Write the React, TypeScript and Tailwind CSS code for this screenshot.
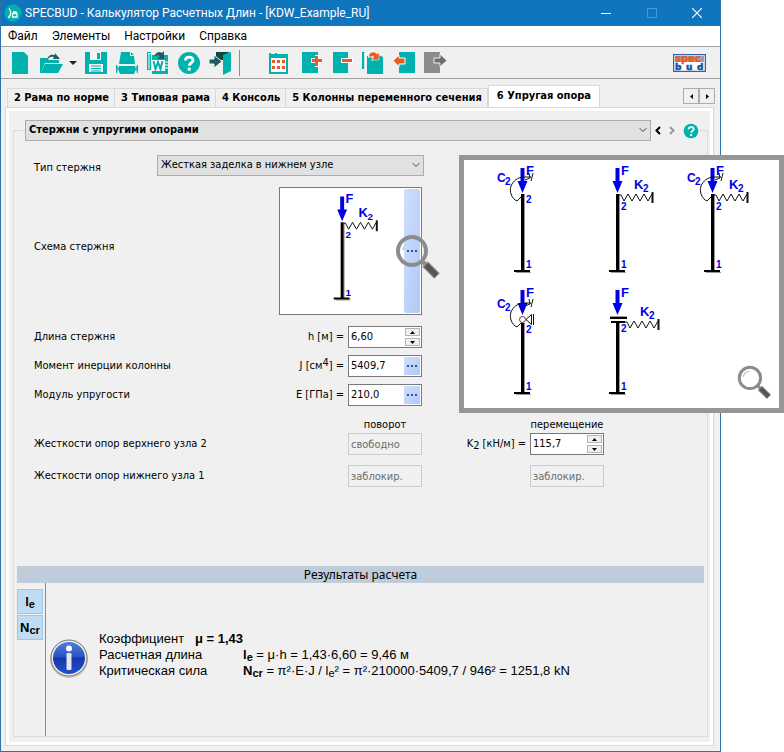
import { useState } from "react";
import type { ReactNode } from "react";
import clsx from "clsx";
import { ChevronDown } from "lucide-react";

const TEAL = "#00b2ad";
const DARK = "#1d5c63";
const ORANGE = "#ea5b24";
const BLUE = "#0000e6";

const tabs = [
  "2 Рама по норме",
  "3 Типовая рама",
  "4 Консоль",
  "5 Колонны переменного сечения",
  "6 Упругая опора",
];

const menu = ["Файл", "Элементы", "Настройки", "Справка"];

// Shared columns of the form: caption, unit, field, unit, field
const fieldGrid =
  "grid grid-cols-[241px_65px_74px_100px_74px] items-center gap-x-1";

// Toolbar icons, all drawn on a 24x24 grid
const icons: Record<string, ReactNode> = {
  new: <path d="M4 1h12l4 4v18H4z" fill={TEAL} />,
  open: (
    <>
      <path d="M1 7h7l2 2h10v3H6L2 22H1z" fill={TEAL} />
      <path d="M6 13h18l-5 9H2z" fill={TEAL} />
      <path d="M8 9c1-5 4-6 8-5V2l5 6h-7l1-2c-3-1-5 0-7 3z" fill={DARK} />
    </>
  ),
  save: (
    <>
      <path d="M1 1h22v22H1z" fill={TEAL} />
      <path d="M6 1h11v8H6zM5 13h14v8H5z" fill="#f4f4f4" />
      <path d="M13 2h3v6h-3z" fill={TEAL} />
      <path d="M7 15h10M7 17.500h10M7 20h10" stroke={TEAL} />
    </>
  ),
  print: (
    <>
      <path d="M6 1h9v4h4l1 8H4z" fill={TEAL} />
      <path d="M16 1l3 3h-3z" fill={TEAL} />
      <path d="M4 15h16l1 3-2 5H5l-2-5z" fill={TEAL} />
      <path d="M1 14h1l1 3-1 5H1zM22 14h1v8h-1l-1-5z" fill={TEAL} />
    </>
  ),
  word: (
    <>
      <path d="M1 1h4v18H1zM6 4h16v19H6z" fill={TEAL} />
      <path d="M3 2v16M2 2.500h5" stroke="#fff" />
      <path d="M6 9h13v11H6z" fill="#fff" />
      <path d="M7.500 10l2 8 2.500-7 2.500 7 2-8" fill="none" stroke={TEAL} strokeWidth="2" />
      <path d="M19 11h3M19 14h3M19 17h3" stroke="#fff" />
      <path d="M8 5c2-4 6-5 8-3l2-2v8h-7l3-3c-2-1-3-1-6 0z" fill={DARK} />
    </>
  ),
  help: (
    <>
      <circle cx="12" cy="12" r="11" fill={TEAL} />
      <path
        d="M8.500 9.500c0-4.500 7.500-4.500 7.500-.3 0 2.800-3.800 2.800-3.800 5.600"
        fill="none"
        stroke="#fff"
        strokeWidth="2.800"
      />
      <path d="M10.700 16.600h3v3h-3z" fill="#fff" />
    </>
  ),
  exit: (
    <>
      <path d="M8 1h14l-5 3v18l-2-2V9H8z" fill="#0e4a3c" />
      <path d="M15 4l8-3v19l-8 4z" fill={TEAL} />
      <path d="M1 8h5V4l8 6.500L6 17v-4H1z" fill={DARK} stroke="#f0f0f0" />
    </>
  ),
  calendar: (
    <>
      <path d="M2 2h2v1h4V2h2v1h11v20H2z" fill={TEAL} />
      <path d="M4 7h15v14H4z" fill="#fff" />
      <path
        d="M5 9h3v3H5zM10 9h3v3h-3zM15 9h3v3h-3zM5 15h3v3H5zM10 15h3v3h-3zM15 15h3v3h-3z"
        fill={ORANGE}
      />
    </>
  ),
  add: (
    <>
      <path d="M2 1h16v21H2z" fill={TEAL} />
      <path d="M11 7h4V4h4v3h3v5h-3v4h-4v-4h-4z" fill="#fff" />
      <path d="M12 8h3V5h3v3h4v3h-4v4h-3v-4h-3z" fill={ORANGE} />
    </>
  ),
  remove: (
    <>
      <path d="M2 1h15v21H2z" fill={TEAL} />
      <path d="M10 7h12v5H10z" fill="#fff" />
      <path d="M11 8h10v3H11z" fill={ORANGE} />
    </>
  ),
  copy: (
    <>
      <path d="M0 1h3v17H0zM5 5h12v-1l4 2v17H5z" fill={TEAL} />
      <path d="M3 2v16M2 2.500h5M6 5.500h5v4" fill="none" stroke="#fff" strokeWidth="1.500" />
      <path d="M7 3c4-3 6-2 8 0l2-2v8h-8l3-3c-2-1-3-1-5 1z" fill={ORANGE} stroke="#fff" strokeWidth=".5" />
    </>
  ),
  back: (
    <>
      <path d="M6 1h16v21H6z" fill={TEAL} />
      <path d="M0 9.500L6 4v3h6v6H6v3z" fill={ORANGE} stroke="#fff" />
    </>
  ),
  forward: (
    <>
      <path d="M0 1h16v21H0z" fill="#8c8c8c" />
      <path d="M10 7h6V3l7 6.500-7 6.500v-4h-6z" fill="#6e6e6e" stroke="#f0f0f0" />
    </>
  ),
};

function ToolButton({ name, label, small = false }: { name: string; label: string; small?: boolean }) {
  return (
    <button type="button" aria-label={label} className="shrink-0">
      <svg viewBox="0 0 24 24" className={small ? "size-4" : "size-6"}>
        {icons[name]}
      </svg>
    </button>
  );
}

type SchemeProps = {
  rotation?: boolean;
  spring?: boolean;
  hinge?: boolean;
  guide?: boolean;
};

// Column with load F, top node 2 and fixed bottom node 1
function Scheme({ rotation, spring, hinge, guide }: SchemeProps) {
  const columnTop = hinge ? 41 : guide ? 39 : 34;
  const labelY = hinge ? 51 : spring ? 50 : 43;

  return (
    <svg
      viewBox="0 0 95 122"
      width="95"
      height="122"
      className="font-['Liberation_Sans'] font-bold"
      fill={BLUE}
    >
      <path d={`M34.500 ${columnTop}V110M26 112.500h15`} stroke="#999" fill="none" />
      <path d={`M31 ${columnTop}h3V110h6v2H24v-2h7z`} fill="#000" />
      <path d="M30.500 8h4v13h3l-5 12-5-12h3z" />
      <text x="36" y="15" fontSize="13">F</text>
      <text x="36" y={labelY} fontSize="10">2</text>
      <text x="36" y="108" fontSize="10">1</text>

      {rotation && (
        <g transform={hinge ? "translate(0 4)" : undefined}>
          <path
            d="M31 37l-4 4c-5-2-8-9-6-15 2-5 7-9 13-9h7M39 13l1 5-5 2M43 13l-2 8"
            fill="none"
            stroke="#111"
          />
          <text x="7" y="22" fontSize="12">C</text>
          <text x="15" y="25" fontSize="10">2</text>
        </g>
      )}

      {spring && (
        <g transform={guide ? "translate(6 5)" : undefined}>
          <path
            d="M34 35h2l3 6 4-7 4 7 4-7 4 7 4-7 4 7 4-7"
            fill="none"
            stroke="#111"
          />
          <path d="M67.500 32v11" stroke="#111" strokeWidth="2" />
          <text x="49" y="29" fontSize="13">K</text>
          <text x="58" y="32" fontSize="10">2</text>
        </g>
      )}

      {hinge && (
        <g stroke="#111" fill="#fff">
          <path d="M36 37.500l5.500-5v10zM43.500 32v11" />
          <circle cx="32.500" cy="37.500" r="3" stroke="#7a2a2a" />
        </g>
      )}

      {guide && (
        <>
          <path d="M25 34h17v1H25z" fill="#999" />
          <path d="M25 35h17v2H25zM26 39h14v2H26z" fill="#000" />
        </>
      )}
    </svg>
  );
}

function Magnifier({ className }: { className?: string }) {
  return (
    <svg viewBox="0 0 46 46" className={className} fill="none">
      <path d="M26 26l6 6" stroke="#8c8c8c" strokeWidth="4" />
      <path d="M30 30l12 12" stroke="#8f8f8f" strokeWidth="8" />
      <path d="M31 31l10.500 10.500" stroke="#555" strokeWidth="5.500" />
      <circle cx="17" cy="17" r="14" stroke="#8c8c8c" strokeWidth="4" />
      <path d="M8 16c1-5 4-7 8-8" stroke="#b8d8f0" strokeWidth="2" />
    </svg>
  );
}

function SelectBox({ value, label, bold = false, className }: {
  value: string;
  label: string;
  bold?: boolean;
  className?: string;
}) {
  return (
    <div className={clsx("relative", className)}>
      <select
        aria-label={label}
        defaultValue={value}
        className={clsx(
          "block h-[21px] w-full appearance-none border border-[#adadad] bg-[#e1e1e1] pl-[3px]",
          bold && "font-bold"
        )}
      >
        <option>{value}</option>
      </select>
      <ChevronDown
        className="pointer-events-none absolute top-1 right-[2px] size-3 text-[#444]"
        strokeWidth={2}
      />
    </div>
  );
}

function MoreButton({ className }: { className?: string }) {
  return (
    <button
      type="button"
      aria-label="Выбрать"
      className={clsx(
        "flex w-4 shrink-0 items-center justify-center gap-[2px] bg-linear-to-br from-[#d3dffc] to-[#aec8f8]",
        className
      )}
    >
      <span className="size-[2px] bg-[#2b569a]" />
      <span className="size-[2px] bg-[#2b569a]" />
      <span className="size-[2px] bg-[#2b569a]" />
    </button>
  );
}

function Field({ id, value, kind }: { id: string; value: string; kind: "spin" | "more" }) {
  const [text, setText] = useState(value);

  // Change the number, keeping the comma and the count of decimals
  const step = (delta: number) => {
    const digits = (text.split(",")[1] || "").length;
    const next = Number(text.replace(",", ".")) + delta;
    setText(next.toFixed(digits).replace(".", ","));
  };

  return (
    <div className="flex h-[22px] border border-[#7a7a7a] bg-white p-px">
      <input
        id={id}
        value={text}
        onChange={(e) => setText(e.target.value)}
        className="w-full min-w-0 bg-transparent pl-px outline-none"
      />
      {kind === "more" ? (
        <MoreButton />
      ) : (
        <div className="flex w-[15px] shrink-0 flex-col justify-between">
          <button
            type="button"
            aria-label="Больше"
            onClick={() => step(0.1)}
            className="flex h-2 items-center justify-center border border-[#b4b4b4] bg-[#f0f0f0]"
          >
            <svg viewBox="0 0 5 3" className="h-[3px] w-[5px]"><path d="M0 3l2.500-3L5 3z" /></svg>
          </button>
          <button
            type="button"
            aria-label="Меньше"
            onClick={() => step(-0.1)}
            className="flex h-2 items-center justify-center border border-[#b4b4b4] bg-[#f0f0f0]"
          >
            <svg viewBox="0 0 5 3" className="h-[3px] w-[5px]"><path d="M0 0l2.500 3L5 0z" /></svg>
          </button>
        </div>
      )}
    </div>
  );
}

function LockedField({ value, label }: { value: string; label: string }) {
  return (
    <input
      disabled
      aria-label={label}
      value={value}
      className="block h-[22px] w-full border border-[#cccccc] bg-[#f0f0f0] pl-[2px] text-[#6d6d6d]"
    />
  );
}

function TitleBar() {
  return (
    <header className="flex h-[26px] items-center bg-[#0f75bc] pl-[3px] font-['Roboto'] text-xs text-white">
      <svg viewBox="0 0 18 18" className="mr-[3px] size-[18px] shrink-0">
        <circle cx="9" cy="9" r="8.500" fill={TEAL} />
        <path d="M5 4c2 3 2 7-.5 10M8.500 13h4.500V9.500H8.500zM9.500 9.500V8h2.500v1.500" stroke="#fff" strokeWidth="1.300" fill="none" />
      </svg>
      <h1 className="flex-1 truncate">SPECBUD - Калькулятор Расчетных Длин - [KDW_Example_RU]</h1>
      <button type="button" aria-label="Свернуть" className="flex w-[46px] justify-center">
        <svg viewBox="0 0 10 10" className="size-[10px]"><path d="M0 5.500h10" stroke="#fff" /></svg>
      </button>
      <button type="button" aria-label="Развернуть" disabled className="flex w-[45px] justify-center">
        <svg viewBox="0 0 10 10" className="size-[10px]"><path d="M.5.5h9v9h-9z" stroke="#4b9ad4" fill="none" /></svg>
      </button>
      <button type="button" aria-label="Закрыть" className="flex w-[46px] justify-center">
        <svg viewBox="0 0 10 10" className="size-[10px]"><path d="M0 0l10 10M10 0L0 10" stroke="#fff" strokeWidth="1.200" /></svg>
      </button>
    </header>
  );
}

function Toolbar() {
  return (
    <div className="flex h-[33px] items-center gap-[7px] border-y border-[#a0a0a0] pr-[14px] pl-[7px]">
      <ToolButton name="new" label="Новый" />
      <div className="flex items-center gap-[6px]">
        <ToolButton name="open" label="Открыть" />
        <button type="button" aria-label="Последние файлы">
          <svg viewBox="0 0 8 4" className="h-1 w-2"><path d="M0 0h8L4 4z" fill="#222" /></svg>
        </button>
      </div>
      <ToolButton name="save" label="Сохранить" />
      <ToolButton name="print" label="Печать" />
      <ToolButton name="word" label="Экспорт в Word" />
      <ToolButton name="help" label="Справка" />
      <ToolButton name="exit" label="Выход" />
      <div className="mr-5 h-[26px] w-px bg-[#8c8c8c]" />
      <ToolButton name="calendar" label="Таблица" />
      <div className="flex gap-[7px] pl-[2px]">
        <ToolButton name="add" label="Добавить" />
        <ToolButton name="remove" label="Удалить" />
        <ToolButton name="copy" label="Копировать" />
        <ToolButton name="back" label="Назад" />
        <ToolButton name="forward" label="Вперед" />
      </div>
      <svg viewBox="0 0 33 18" className="ml-auto h-[18px] w-[33px] font-['DejaVu_Sans'] font-bold">
        <path d="M.5.5h32v17H.5z" fill="#fff" stroke="#2a66a8" strokeWidth="1.500" />
        <path d="M2 2h29v6H2z" fill="#8fa3b3" />
        <text x="2" y="8" fontSize="10" fill={ORANGE} stroke={ORANGE} strokeWidth=".4">spec</text>
        <g fill="#0f58a8" stroke="#0f58a8" strokeWidth=".6" fontSize="9">
          <text x="2" y="16">b</text>
          <text x="13" y="16">u</text>
          <text x="24" y="16">d</text>
        </g>
      </svg>
    </div>
  );
}

function TabStrip({ active, onSelect }: { active: number; onSelect: (i: number) => void }) {
  return (
    <div className="flex h-[28px] items-end pr-[5px] pl-[6px]">
      <div role="tablist" className="flex flex-1 items-end font-bold">
        {tabs.map((tab, i) => (
          <button
            key={tab}
            type="button"
            role="tab"
            aria-selected={i === active}
            onClick={() => onSelect(i)}
            className={clsx(
              "border border-b-0 border-[#d9d9d9] whitespace-nowrap",
              i === active ? "h-[22px] bg-white px-2" : "h-[19px] border-l-0 pr-[5px] pl-[6px] first:border-l"
            )}
          >
            {tab}
          </button>
        ))}
      </div>
      <div className="flex self-center pt-[6px]">
        <button type="button" aria-label="Предыдущая вкладка" className="flex size-4 items-center justify-center border border-[#adadad]">
          <svg viewBox="0 0 3 5" className="h-[5px] w-[3px]"><path d="M3 0v5L0 2.500z" /></svg>
        </button>
        <button type="button" aria-label="Следующая вкладка" className="flex size-4 items-center justify-center border border-[#adadad]">
          <svg viewBox="0 0 3 5" className="h-[5px] w-[3px]"><path d="M0 0v5l3-2.500z" /></svg>
        </button>
      </div>
    </div>
  );
}

function RodForm() {
  return (
    <div className="mb-[79px] pl-[17px]">
      {/* Rod type */}
      <div className="flex items-end pt-[14px]">
        <span className="w-[123px]">Тип стержня</span>
        <SelectBox label="Тип стержня" value="Жесткая заделка в нижнем узле" className="w-[267px]" />
      </div>

      {/* Rod scheme */}
      <div className={clsx(fieldGrid, "pt-[11px]")}>
        <span className="pb-2">Схема стержня</span>
        <div className="relative col-span-2 flex h-32 border border-[#7a7a7a] bg-white pr-px pl-[30px]">
          <Scheme spring />
          <MoreButton className="my-px ml-auto rounded-[2px]" />
          <Magnifier className="pointer-events-none absolute top-[46px] -right-5 size-[46px]" />
        </div>
      </div>

      {/* Parameters */}
      <div className={clsx(fieldGrid, "gap-y-[7px] pt-[11px]")}>
        <span>Длина стержня</span>
        <label htmlFor="length" className="text-right">h [м] =</label>
        <Field id="length" value="6,60" kind="spin" />

        <span className="col-start-1">Момент инерции колонны</span>
        <label htmlFor="inertia" className="text-right">J [см<sup>4</sup>] =</label>
        <Field id="inertia" value="5409,7" kind="more" />

        <span className="col-start-1">Модуль упругости</span>
        <label htmlFor="modulus" className="text-right">E [ГПа] =</label>
        <Field id="modulus" value="210,0" kind="more" />
      </div>

      {/* Support stiffness */}
      <div className={clsx(fieldGrid, "pt-[11px]")}>
        <span className="col-start-3 text-center leading-4">поворот</span>
        <span className="col-start-5 text-center leading-4 whitespace-nowrap">перемещение</span>
      </div>
      <div className={clsx(fieldGrid, "gap-y-[10px]")}>
        <span>Жесткости опор верхнего узла 2</span>
        <div className="col-start-3"><LockedField label="Поворот, узел 2" value="свободно" /></div>
        <label htmlFor="k2" className="text-right">K<sub>2</sub> [кН/м] =</label>
        <Field id="k2" value="115,7" kind="spin" />

        <span className="col-start-1">Жесткости опор нижнего узла 1</span>
        <div className="col-start-3"><LockedField label="Поворот, узел 1" value="заблокир." /></div>
        <div className="col-start-5"><LockedField label="Перемещение, узел 1" value="заблокир." /></div>
      </div>
    </div>
  );
}

function InfoIcon() {
  return (
    <svg viewBox="0 0 40 40" className="size-10 shrink-0">
      <defs>
        <linearGradient id="info" x1="0" y1="0" x2="0" y2="1">
          <stop offset="0" stopColor="#4f7fdc" />
          <stop offset=".45" stopColor="#2a55c4" />
          <stop offset=".5" stopColor="#1438a8" />
          <stop offset="1" stopColor="#1f4fd0" />
        </linearGradient>
      </defs>
      <circle cx="20" cy="21" r="19" fill="#c4c4c4" />
      <circle cx="20" cy="20" r="18" fill="#eee" stroke="#777" />
      <circle cx="20" cy="20" r="16" fill="url(#info)" />
      <circle cx="20" cy="10.500" r="3" fill="#fff" />
      <rect x="17.500" y="15" width="5" height="17" rx="1" fill="#e6e6ea" />
    </svg>
  );
}

function Results() {
  return (
    <section>
      <h2 className="h-[17px] bg-[#bfccd9] text-center font-['Noto_Sans'] text-xs leading-[17px]">
        Результаты расчета
      </h2>
      <div className="flex min-h-[153px] font-['Liberation_Sans'] text-[13px]">
        <div className="flex w-[29px] shrink-0 flex-col gap-px border-r border-[#8c8c8c] pt-[6px] pr-[2px] font-bold">
          <button type="button" className="h-[25px] border border-[#99c9ef] bg-[#c0dcf3]">
            l<sub>e</sub>
          </button>
          <button type="button" className="h-[25px] border border-[#99c9ef] bg-[#c0dcf3]">
            N<sub>cr</sub>
          </button>
        </div>
        <div className="flex items-center gap-[10px] pb-1 pl-[3px]">
          <InfoIcon />
          <div className="pb-[6px] leading-4 [&_sub]:bottom-[-2px] [&_sub]:text-[10px]">
            <p className="flex">
              <span className="w-24 shrink-0">Коэффициент</span>
              <b>μ = 1,43</b>
            </p>
            <p className="flex">
              <span className="w-36 shrink-0">Расчетная длина</span>
              <span><b>l<sub>e</sub></b> = μ·h = 1,43·6,60 = 9,46 м</span>
            </p>
            <p className="flex">
              <span className="w-36 shrink-0">Критическая сила</span>
              <span>
                <b>N<sub>cr</sub></b> = π²·E·J / l<sub>e</sub>² = π²·210000·5409,7 / 946² = 1251,8 kN
              </span>
            </p>
          </div>
        </div>
      </div>
    </section>
  );
}

// Picker with all the available schemes
function SchemePicker() {
  const schemes: SchemeProps[] = [
    { rotation: true },
    { spring: true },
    { rotation: true, spring: true },
    { rotation: true, hinge: true },
    { spring: true, guide: true },
  ];

  return (
    <div className="absolute top-[155px] right-0 h-[258px] w-[325px] border-5 border-[#969696] bg-white pl-[26px]">
      <div className="grid grid-cols-[95px_95px_95px]">
        {schemes.map((scheme, i) => (
          <button key={i} type="button" aria-label={`Схема ${i + 1}`}>
            <Scheme {...scheme} />
          </button>
        ))}
      </div>
      <Magnifier className="absolute right-[7px] bottom-2 size-[35px]" />
    </div>
  );
}

const App = () => {
  const [active, setActive] = useState(4);

  return (
    <div className="relative min-h-screen bg-white font-['DejaVu_Sans_Condensed','Noto_Sans',sans-serif] text-[11px] text-black [&_sub]:bottom-[-2px] [&_sub]:text-[11px] [&_sup]:top-[-3px] [&_sup]:text-[11px]">
      <main className="mr-[63px] flex min-h-screen flex-col border border-t-0 border-[#2a74ab] bg-[#f0f0f0]">
        <TitleBar />
        <nav className="flex h-5 items-center gap-[14px] bg-white px-[7px] font-['Roboto'] text-xs">
          {menu.map((item) => (
            <button key={item} type="button">{item}</button>
          ))}
        </nav>
        <Toolbar />
        <TabStrip active={active} onSelect={setActive} />

        <div className="mr-[6px] mb-[5px] ml-1 flex flex-1 flex-col border border-[#d9d9d9] bg-white p-[3px]">
          <div className="flex flex-1 flex-col bg-[#f0f0f0] pt-[9px] pr-[2px] pb-[5px] pl-1">
            <fieldset className="min-w-0 flex-1 border border-[#dcdcdc] px-[3px]">
              <legend className="mr-[5px] ml-2 flex w-[calc(100%-13px)] items-center">
                <SelectBox
                  label="Раздел"
                  value="Стержни с упругими опорами"
                  bold
                  className="flex-1"
                />
                <button type="button" aria-label="Предыдущий" className="pl-1">
                  <svg viewBox="0 0 6 9" className="h-[9px] w-[6px]"><path d="M5 1L1.500 4.500 5 8" fill="none" stroke="#000" strokeWidth="2" /></svg>
                </button>
                <button type="button" aria-label="Следующий" disabled className="px-2">
                  <svg viewBox="0 0 6 9" className="h-[9px] w-[6px]"><path d="M1 1l3.500 3.500L1 8" fill="none" stroke="#999" strokeWidth="2" /></svg>
                </button>
                <ToolButton name="help" label="Справка по разделу" small />
              </legend>
              <RodForm />
              <Results />
            </fieldset>
          </div>
        </div>
      </main>

      <SchemePicker />
    </div>
  );
};

export default App;
